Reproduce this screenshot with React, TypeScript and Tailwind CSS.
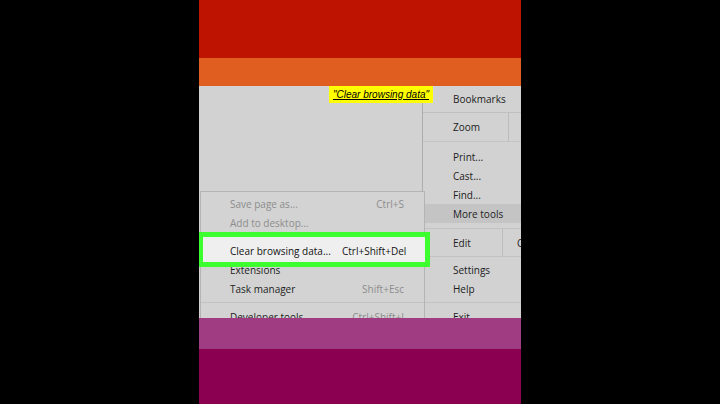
import React from "react";

function SubItem({ label, keys, dim = false, keysDim = true }: { label: string; keys?: string; dim?: boolean; keysDim?: boolean }) {
  return (
    <div className="flex h-[19px] shrink-0 items-center justify-between pl-[29px] pr-[20px]">
      <span className={dim ? "text-[#8d8d8d]" : "text-[#1c1c1c]"}>{label}</span>
      {keys && <span className={keysDim ? "text-[#8d8d8d]" : "text-[#1c1c1c]"}>{keys}</span>}
    </div>
  );
}

function MenuItem({ label, active = false }: { label: string; active?: boolean }) {
  return (
    <div className={`flex h-[19px] shrink-0 items-center pl-[30px] text-[#1c1c1c] ${active ? "bg-[#c4c4c4]" : ""}`}>
      {label}
    </div>
  );
}

function Separator() {
  return (
    <div className="flex h-[9px] shrink-0 items-center">
      <div className="h-px w-full bg-[#c2c2c2]" />
    </div>
  );
}

export default function App() {
  return (
    <div className="flex h-[404px] w-[720px] bg-black">
      <div className="ml-[199px] flex w-[322px] shrink-0 flex-col">
        <div className="h-[58px] shrink-0 bg-[#be1300]" />
        <div className="h-[28px] shrink-0 bg-[#e05f20]" />

        {/* menu screenshot */}
        <div className="relative flex h-[232px] shrink-0 overflow-hidden bg-[#d2d2d2] font-['Open_Sans',sans-serif] text-[10px] leading-none">
          <div className="flex w-[223px] shrink-0 flex-col">
            <div className="h-[105px] shrink-0" />
            <div className="relative z-10 -mr-[3px] ml-px flex shrink-0 flex-col border-l border-r border-t border-[#b4b4b4] bg-[#d3d3d3] pt-[2px] pb-[20px]">
              <SubItem label="Save page as..." keys="Ctrl+S" dim />
              <SubItem label="Add to desktop..." dim />
              <Separator />
              <div className="relative shrink-0">
                <div className="absolute -bottom-[7px] -left-[3px] -right-[6px] -top-[9px] z-10 border-[5px] border-[#3dff30] bg-[#efefef]" />
                <div className="relative z-20 flex h-[19px] items-center pl-[29px] text-[#141414]">
                  <span className="w-[112px]">Clear browsing data...</span>
                  <span>Ctrl+Shift+Del</span>
                </div>
              </div>
              <SubItem label="Extensions" />
              <SubItem label="Task manager" keys="Shift+Esc" />
              <Separator />
              <SubItem label="Developer tools" keys="Ctrl+Shift+I" />
            </div>
          </div>

          <div className="flex min-w-0 flex-1 flex-col overflow-hidden border-l border-[#adadad]">
            <div className="flex h-[27px] shrink-0 items-center border-b border-[#c0c0c0] pl-[30px] text-[#1c1c1c]">Bookmarks</div>
            <div className="flex h-[29px] shrink-0 border-b border-[#c4c4c4]">
              <div className="flex w-[86px] shrink-0 items-center border-r border-[#bcbcbc] pl-[30px] text-[#1c1c1c]">Zoom</div>
            </div>
            <div className="shrink-0 pt-[5px]">
              <MenuItem label="Print..." />
              <MenuItem label="Cast..." />
              <MenuItem label="Find..." />
              <MenuItem label="More tools" active />
            </div>
            <div className="mt-[5px] flex h-[29px] shrink-0 border-b border-t border-[#c2c2c2]">
              <div className="flex w-[80px] shrink-0 items-center border-r border-[#bcbcbc] pl-[30px] text-[#1c1c1c]">Edit</div>
              <div className="flex shrink-0 items-center pl-[14px] text-[#1c1c1c]">Copy</div>
            </div>
            <div className="shrink-0 pt-[3px]">
              <MenuItem label="Settings" />
              <MenuItem label="Help" />
              <Separator />
              <MenuItem label="Exit" />
            </div>
          </div>

          <div className="absolute left-[130px] top-0 z-30 flex h-[17px] items-center bg-[#ffff00] px-[4px] font-['Liberation_Sans',Arial,sans-serif] text-[10px] italic text-black underline">
            "Clear browsing data"
          </div>
        </div>

        <div className="h-[31px] shrink-0 bg-[#a03c82]" />
        <div className="flex-1 bg-[#8b0050]" />
      </div>
    </div>
  );
}
